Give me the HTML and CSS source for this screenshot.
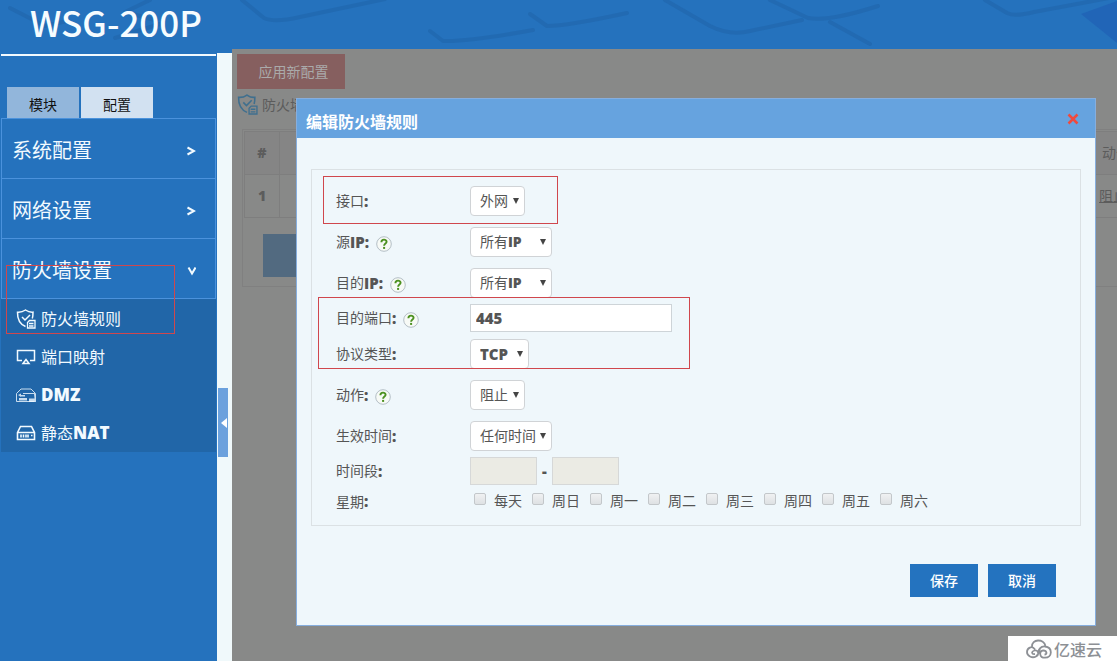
FILE: index.html
```html
<!DOCTYPE html>
<html lang="zh-CN">
<head>
<meta charset="utf-8">
<title>WSG-200P</title>
<link rel="stylesheet" href="styles.css">
</head>
<body>
<svg class="symbols" aria-hidden="true">
  <symbol id="shield" viewBox="0 0 20 20"><g fill="none" stroke="currentColor" stroke-width="1.5"><path d="M9.500 17.500C3.800 15 1.300 10.500 1.500 3.200 5 3.500 7.200 2.600 9.500 1c2.300 1.600 4.500 2.500 7.500 2.200 0 2.500 0 4.500-.7 6.300M6 8l3 3 5-5"/><path d="M13.500 11.500h5.500v7.500H11.500v-5.500zM13 14.500h4.500M13 17h4.500" stroke-width="1.300"/></g></symbol>
  <symbol id="screen" viewBox="0 0 20 20"><path fill="none" stroke="currentColor" stroke-width="1.500" d="M6 13.500H1.500V3.500h17v10H14M7 16.500l3-4 3 4z"/></symbol>
  <symbol id="router" viewBox="0 0 20 20"><path fill="none" stroke="currentColor" opacity=".8" d="M.5 8.500L5 4h10l4.500 4.500H7M.5 8.500v8h18"/><path fill="currentColor" opacity=".8" d="M2 10l3-1.500V10h4v1.500H5V12zM3 13h8v2.500H3zM13 13.500h6V17h-6zM18 9h2v8h-1z"/></symbol>
  <symbol id="switch" viewBox="0 0 20 20"><path fill="none" stroke="currentColor" stroke-width="1.600" d="M1.500 9.500L4.500 3.500h11l3 6v7h-17zM1.500 9.500h17M5 11.500v3M7.500 11.500v3M10 11.500v3M12 11.500v3M15 12.500h1.500"/></symbol>
  <symbol id="help" viewBox="0 0 16 16"><circle cx="8" cy="8" r="7.300" fill="#f7faf6" stroke="#b4bfc6"/><path d="M5.400 6.200c0-3.400 5.200-3.300 5.200-.4 0 1.800-2.500 1.800-2.500 4" fill="none" stroke="#4c9120" stroke-width="1.900"/><rect x="7.100" y="10.900" width="2" height="2" fill="#4c9120"/></symbol>
</svg>
<header class="banner">
  <svg class="waves" viewBox="0 0 1117 49" preserveAspectRatio="xMinYMin slice" aria-hidden="true">
    <path d="M1081 14l36-13v42z" fill="#1f5fb5" opacity=".7"/>
    <g fill="none" stroke="#1c5c9e" stroke-linecap="round" stroke-linejoin="round" stroke-width="4" opacity=".35">
      <path d="M10 8l35 18 22-5M115 38l45-14M150 0l-25 12 30 8M242 0l22 18q10 5 36-1l85-18"/>
      <path d="M430 31l13 10q25 1 90-11M530 14l17 12q20 0 80-13M665 0l45 26q20 10 40 5l52-11M770 0l38 18q20 4 70-12M830 22l40 22M985 0l22 13q8 4 27-1l75-14"/>
    </g>
  </svg>
  <h1 class="logo">WSG-200P</h1>
</header>
<div class="layout">
  <nav class="sidebar" aria-label="主导航">
    <div class="tabs">
      <button class="tab" type="button">模块</button>
      <button class="tab tab-current" type="button">配置</button>
    </div>
    <div class="menu">
      <button class="menu-item" type="button"><span>系统配置</span><svg viewBox="0 0 10 10"><path d="M1.500 1.500L8 5 1.500 8.500"/></svg></button>
      <button class="menu-item" type="button"><span>网络设置</span><svg viewBox="0 0 10 10"><path d="M1.500 1.500L8 5 1.500 8.500"/></svg></button>
      <button class="menu-item" type="button"><span>防火墙设置</span><svg viewBox="0 0 10 10"><path d="M2.500 1.500L6 7.500l3.500-6"/></svg></button>
    </div>
    <div class="submenu">
      <a href="#rules"><svg><use href="#shield"/></svg><span>防火墙规则</span></a>
      <a href="#ports"><svg><use href="#screen"/></svg><span>端口映射</span></a>
      <a href="#dmz"><svg><use href="#router"/></svg><b>DMZ</b></a>
      <a href="#nat"><svg><use href="#switch"/></svg><span>静态<b>NAT</b></span></a>
    </div>
    <div class="mark mark-menu"></div>
  </nav>
  <div class="gutter"><button class="collapse" type="button" aria-label="收起"><svg viewBox="0 0 6 10"><path d="M6 0v10L0 5z"/></svg></button></div>
  <main class="content">
    <button class="apply" type="button">应用新配置</button>
    <div class="crumb"><svg><use href="#shield"/></svg><span>防火墙规则</span></div>
    <div class="panel">
      <table class="rules">
        <thead><tr><th class="num">#</th><th></th><th class="act act-head">动作</th></tr></thead>
        <tbody><tr><td class="num">1</td><td></td><td class="act"><a href="#rule1">阻止</a></td></tr></tbody>
      </table>
      <button class="add" type="button" aria-label="新增"></button>
    </div>
  </main>
</div>

<section class="dialog" role="dialog" aria-labelledby="dialog-title">
  <div class="dialog-head">
    <h2 id="dialog-title">编辑防火墙规则</h2>
    <button class="close" type="button" aria-label="关闭"><svg viewBox="0 0 12 12"><path d="M1.500 1.500l9 9M10.500 1.500l-9 9"/></svg></button>
  </div>
  <form class="dialog-body">
    <div class="fields">
      <div class="row"><label for="iface">接口<b>:</b></label><span class="pick w-s"><select id="iface"><option>外网</option></select></span></div>
      <div class="row"><label for="src">源<b>IP:</b><svg><use href="#help"/></svg></label><span class="pick w-l"><select id="src"><option>所有IP</option></select></span></div>
      <div class="row"><label for="dst">目的<b>IP:</b><svg><use href="#help"/></svg></label><span class="pick w-l"><select id="dst"><option>所有IP</option></select></span></div>
      <div class="row row-short"><label for="port">目的端口<b>:</b><svg><use href="#help"/></svg></label><input class="text" id="port" type="text" value="445"></div>
      <div class="row"><label for="proto">协议类型<b>:</b></label><span class="pick w-m"><select id="proto"><option>TCP</option></select></span></div>
      <div class="row"><label for="action">动作<b>:</b><svg><use href="#help"/></svg></label><span class="pick w-s"><select id="action"><option>阻止</option></select></span></div>
      <div class="row"><label for="when">生效时间<b>:</b></label><span class="pick w-l"><select id="when"><option>任何时间</option></select></span></div>
      <div class="row row-short"><label for="from">时间段<b>:</b></label><div class="range"><input id="from" type="text" disabled><b>-</b><input type="text" aria-label="结束时间" disabled></div></div>
      <div class="row row-short"><span class="name">星期<b>:</b></span><div class="days">
        <label><input type="checkbox">每天</label><label><input type="checkbox">周日</label><label><input type="checkbox">周一</label><label><input type="checkbox">周二</label><label><input type="checkbox">周三</label><label><input type="checkbox">周四</label><label><input type="checkbox">周五</label><label><input type="checkbox">周六</label>
      </div></div>
      <div class="mark mark-iface"></div>
      <div class="mark mark-port"></div>
    </div>
    <div class="actions"><button type="button">保存</button><button type="button">取消</button></div>
  </form>
</section>

<div class="brand">
  <svg viewBox="0 0 26 20"><path fill="none" stroke="currentColor" stroke-width="1.800" d="M6 8C5.500-.5 18-.5 19.500 7M9 10.500C6 6 1 9 1 13s5 6.500 9 4.500 2-7-1.500-6-3 4 .5 3.500M13 14c-1.500-3 2-7 6-6.500 8 1 7.500 11 0 11.200-6 0-6-6.700-2-7.200 4-.2 4.500 4 1.500 4M10 17c3-1 3-5 4-7"/></svg>
  <span>亿速云</span>
</div>
</body>
</html>
```

FILE: styles.css
```css
* { box-sizing: border-box; }

body {
  margin: 0;
  min-height: 100vh;
  display: flex;
  flex-direction: column;
  position: relative;
  overflow: hidden;
  background: #2572bd;
  color: #555;
  font: 14px/20px "Open Sans ExtraBold", "Noto Sans CJK SC", sans-serif;
}

button, input, select { font: inherit; color: inherit; margin: 0; }
button { border: 0; padding: 0; cursor: pointer; }
a { color: inherit; text-decoration: none; }
b { font-family: "Open Sans", sans-serif; font-weight: 800; font-size: 15px; }
.symbols { position: absolute; width: 0; height: 0; }

.banner { position: relative; height: 49px; }
.waves { position: absolute; inset: 0; width: 100%; height: 49px; }
.logo {
  position: relative;
  margin: 0;
  padding-left: 30px;
  color: #f6fcff;
  font: 500 35px/44px "Noto Sans CJK SC", sans-serif;
}

.layout { flex: 1; display: flex; }
.sidebar {
  position: relative;
  width: 217px;
  padding: 5px 1px 0;
  color: #f2faff;
}
.tabs {
  display: flex;
  gap: 2px;
  padding: 31px 6px 0;
  border-top: 2px solid #f2faff;
}
.tab { width: 72px; height: 31px; padding-top: 4px; background: #92b6db; color: #111; }
.tab-current { background: #d2e1f1; }
.menu { border: 1px solid #4b92dc; border-bottom: 0; }
.menu-item {
  width: 100%;
  height: 60px;
  display: flex;
  align-items: center;
  justify-content: space-between;
  padding: 4px 19px 0 10px;
  border-bottom: 1px solid #4b92dc;
  background: none;
  font-size: 20px;
}
.menu-item svg { width: 10px; height: 10px; fill: none; stroke: currentColor; stroke-width: 2; }
.submenu { padding-top: 1px; background: #2166a8; }
.submenu a {
  height: 38px;
  display: flex;
  align-items: center;
  gap: 5px;
  padding-left: 15px;
  font-size: 16px;
}
.submenu svg { width: 20px; height: 20px; }
.submenu b { font-size: 17px; }

.gutter {
  width: 15px;
  padding: 335px 1px 0;
  border-top: 4px solid #2572bd;
  background: #f0f9fb;
}
.collapse { width: 10px; height: 69px; padding-left: 3px; background: #6ba1dd; display: flex; align-items: center; }
.collapse svg { width: 6px; height: 10px; fill: #fff; }

.content { flex: 1; min-width: 0; overflow: hidden; padding: 5px 0 0 5px; background: #888988; color: #5c5c5c; }
.apply { display: block; width: 108px; height: 35px; padding-left: 5px; background: #865f5f; color: #aaa; }
.crumb { display: flex; align-items: center; gap: 4px; height: 31px; }
.crumb svg { width: 21px; height: 21px; color: #3f6f8e; }
.panel { margin: 9px -60px 0 5px; padding: 1px; border: 1px solid #808080; }
.rules { width: 100%; border-collapse: collapse; table-layout: fixed; }
.rules th, .rules td { height: 43px; padding: 0; border: 1px solid #7e7e7e; font-weight: 400; }
.rules th { background: #858585; }
.rules .num { width: 35px; text-align: center; font-family: "Open Sans", sans-serif; font-weight: 800; }
.rules .act { width: 84px; text-align: left; padding-left: 8px; }
.rules .act-head { padding-left: 11px; }
.rules td a { text-decoration: underline; }
.add { display: block; width: 84px; height: 43px; margin: 16px 0 8px 19px; background: #526a80; }

.dialog {
  position: absolute;
  top: 98px;
  left: 296px;
  right: 21px;
  border: 1px solid #86aede;
  background: #eff7fb;
}
.dialog-head {
  height: 39px;
  display: flex;
  align-items: center;
  justify-content: space-between;
  padding: 0 16px 0 9px;
  background: #66a3df;
}
.dialog-head h2 { margin: 0; padding-top: 4px; color: #fff; font: 700 16px/24px "Noto Sans CJK SC", sans-serif; }
.close { width: 12px; height: 12px; background: none; display: flex; }
.close svg { width: 12px; height: 12px; stroke: #f04a3e; stroke-width: 2.500; }
.dialog-body { padding: 31px 14px 28px; }
.fields { position: relative; padding: 10px 24px 9px; border: 1px solid #dbe1e4; }
.row { display: grid; grid-template-columns: 134px 1fr; align-items: center; height: 41px; }
.row-short { height: 30px; }
.row > label { display: flex; align-items: center; }
.row > label svg { width: 16px; height: 16px; margin: 4px 0 0 7px; }
.pick { position: relative; }
.pick select {
  width: 100%;
  height: 30px;
  display: block;
  padding: 0 0 0 9px;
  appearance: none;
  border: 1px solid #d0d3d6;
  border-radius: 4px;
  background: #fff;
}
.pick::after {
  content: "";
  position: absolute;
  right: 6px;
  top: 12px;
  border: solid transparent;
  border-width: 6px 3px 0;
  border-top-color: #444;
}
.w-s { width: 55px; }
.w-m { width: 59px; }
.w-l { width: 82px; }
.text { width: 202px; height: 28px; padding: 0 5px; border: 1px solid #ced4d8; background: #fff; }
.text, #proto { font-family: "Open Sans", sans-serif; font-weight: 800; font-size: 15px; }
.range { display: flex; align-items: center; }
.range input { width: 67px; height: 28px; border: 1px solid #d6d8d8; background: #ebebe4; }
.range b { width: 15px; text-align: center; }
.days { display: flex; gap: 10px; padding-left: 4px; }
.days label { display: flex; align-items: center; gap: 8px; white-space: nowrap; }
.days input {
  width: 12px;
  height: 12px;
  margin: 0 0 4px;
  appearance: none;
  border: 1px solid #c3c7ca;
  border-radius: 2px;
  background: linear-gradient(#f0f1f2, #dee1e3);
}
.actions { display: flex; justify-content: flex-end; gap: 10px; padding: 38px 25px 0 0; }
.actions button { width: 68px; height: 33px; background: #2473bf; color: #fff; font-weight: 500; }

.mark { position: absolute; border: 1px solid #d0474d; pointer-events: none; }
.mark-menu { left: 6px; top: 216px; width: 169px; height: 69px; }
.mark-iface { left: 11px; top: 6px; width: 235px; height: 48px; }
.mark-port { left: 6px; top: 127px; width: 372px; height: 72px; }

.brand {
  position: absolute;
  right: 0;
  bottom: 0;
  width: 109px;
  height: 25px;
  display: flex;
  align-items: center;
  gap: 2px;
  padding-left: 18px;
  background: #fff;
  color: #8d9095;
  font: 500 16px/24px "Noto Sans CJK SC", sans-serif;
}
.brand svg { width: 26px; height: 20px; }
```
